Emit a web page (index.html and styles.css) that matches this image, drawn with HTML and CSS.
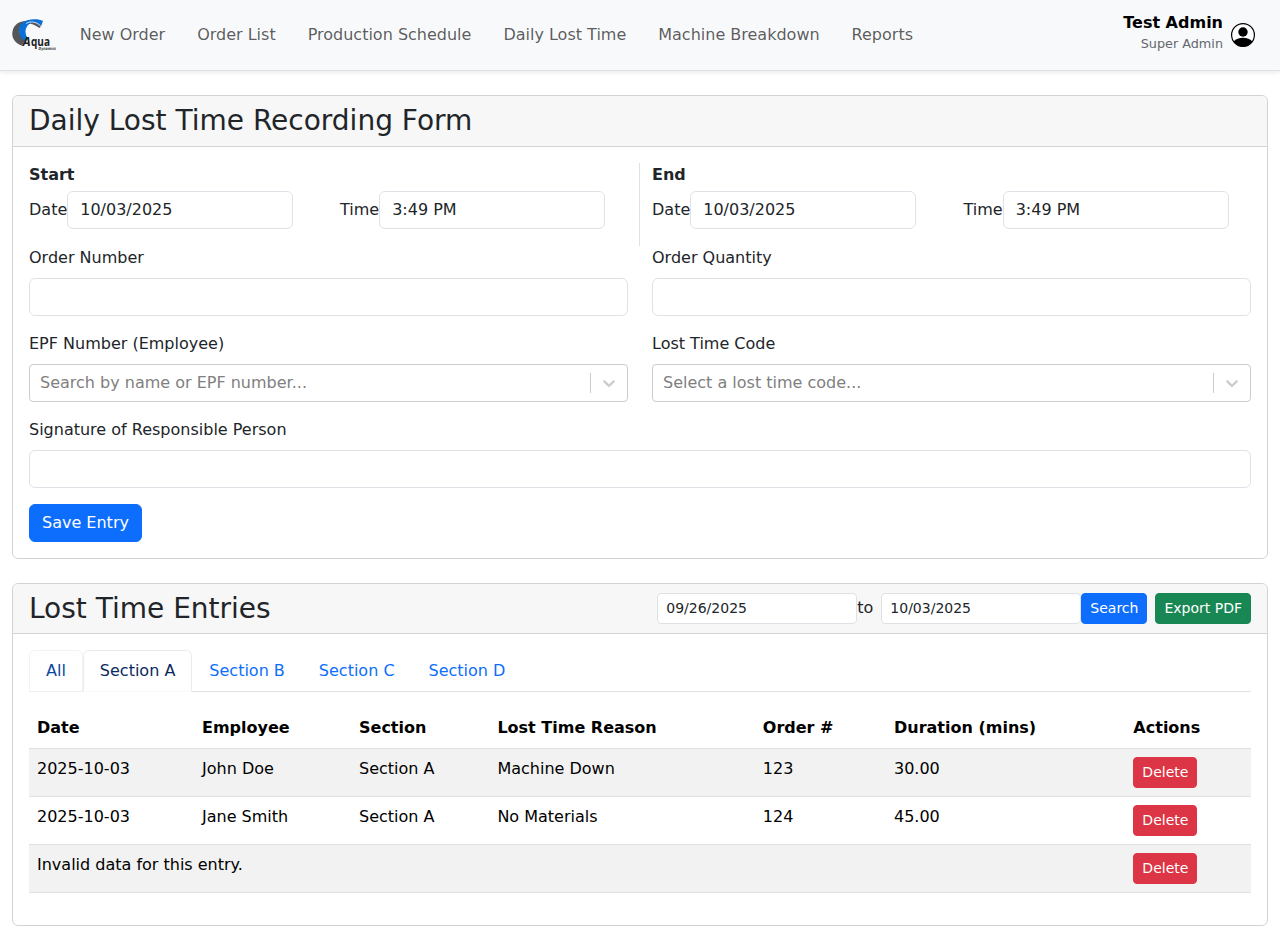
FILE: index.html
```html
<!DOCTYPE html>
<html lang="en">
<head>
<meta charset="utf-8">
<title>Daily Lost Time</title>
<link rel="stylesheet" href="styles.css">
</head>
<body>
<nav class="navbar">
  <svg class="logo" width="46" height="38" viewBox="0 -1 46 38" role="img" aria-label="Aqua Dynamics">
    <path fill="#55565a" d="M23 5C14 2 2 4 0.400 15C-0.500 21 3 26 9.500 28.500L14 22.500C5.500 18 5 9 14 6.500C19 5.500 23 8.500 27.500 11L29 9.500C28 7.500 26 6 23 5Z"/>
    <path fill="#0a6fd6" d="M31 4C26 1.200 15 1.500 9.500 6.500C5 11.500 7 19.500 12.500 24L15.500 21C12 15 13 8.500 20 5.500C24 4.500 26.500 6 29 9.500Z"/>
    <path fill="none" stroke="#f8f9fb" stroke-width=".8" d="M14 6.500C19 3.500 25 5 29 9.500"/>
    <text class="logo-name" y="28.600"><tspan class="slant" x="10.500">A</tspan><tspan x="19" textLength="19" lengthAdjust="spacingAndGlyphs">qua</tspan></text>
    <text class="logo-sub" x="26.500" y="32.800" textLength="17.500" lengthAdjust="spacingAndGlyphs">Dynamics</text>
  </svg>
  <div class="links">
    <a>New Order</a><a>Order List</a><a>Production Schedule</a><a>Daily Lost Time</a><a>Machine Breakdown</a><a>Reports</a>
  </div>
  <div class="user">
    <div class="user-text"><div class="user-name">Test Admin</div><div class="user-role">Super Admin</div></div>
    <svg width="24" height="24" viewBox="0 0 24 24">
      <circle cx="12" cy="12" r="11.400" fill="#fff" stroke="#000" stroke-width="1.200"/>
      <circle cx="12" cy="9" r="4.700"/>
      <path d="M2.600 18.500C5 16 8 14.800 12 14.800S19 16 21.400 18.500C19 22 15.500 23.800 12 23.800S5 22 2.600 18.500Z"/>
    </svg>
  </div>
</nav>

<main>
  <section class="card">
    <div class="card-header"><h3>Daily Lost Time Recording Form</h3></div>
    <form class="card-body">
      <div class="periods">
        <div class="period period-start">
          <strong>Start</strong>
          <div class="pair">
            <label>Date<input class="control short" value="10/03/2025"></label>
            <label>Time<input class="control short" value="3:49 PM"></label>
          </div>
        </div>
        <div class="period">
          <strong>End</strong>
          <div class="pair">
            <label>Date<input class="control short" value="10/03/2025"></label>
            <label>Time<input class="control short" value="3:49 PM"></label>
          </div>
        </div>
      </div>
      <div class="fields">
        <div class="field"><label>Order Number</label><input class="control"></div>
        <div class="field"><label>Order Quantity</label><input class="control"></div>
        <div class="field"><label>EPF Number (Employee)</label>
          <div class="select"><span class="placeholder">Search by name or EPF number...</span><span class="separator"></span>
            <svg class="chevron" width="20" height="20" viewBox="0 0 20 20"><path d="M4.516 7.548c0.436-0.446 1.043-0.481 1.576 0l3.908 3.747 3.908-3.747c0.533-0.481 1.141-0.446 1.574 0 0.436 0.445 0.408 1.197 0 1.615-0.406 0.418-4.695 4.502-4.695 4.502-0.217 0.223-0.502 0.335-0.787 0.335s-0.570-0.112-0.789-0.335c0 0-4.287-4.084-4.695-4.502s-0.436-1.170 0-1.615z"/></svg>
          </div>
        </div>
        <div class="field"><label>Lost Time Code</label>
          <div class="select"><span class="placeholder">Select a lost time code...</span><span class="separator"></span>
            <svg class="chevron" width="20" height="20" viewBox="0 0 20 20"><path d="M4.516 7.548c0.436-0.446 1.043-0.481 1.576 0l3.908 3.747 3.908-3.747c0.533-0.481 1.141-0.446 1.574 0 0.436 0.445 0.408 1.197 0 1.615-0.406 0.418-4.695 4.502-4.695 4.502-0.217 0.223-0.502 0.335-0.787 0.335s-0.570-0.112-0.789-0.335c0 0-4.287-4.084-4.695-4.502s-0.436-1.170 0-1.615z"/></svg>
          </div>
        </div>
        <div class="field wide"><label>Signature of Responsible Person</label><input class="control"></div>
      </div>
      <button class="btn primary" type="button">Save Entry</button>
    </form>
  </section>

  <section class="card">
    <div class="card-header">
      <h3>Lost Time Entries</h3>
      <div class="filters">
        <input class="control small" value="09/26/2025"><span class="to">to</span><input class="control small" value="10/03/2025"><button class="btn primary btn-sm search">Search</button><button class="btn success btn-sm">Export PDF</button>
      </div>
    </div>
    <div class="card-body">
      <div class="tabs">
        <a class="tab leaving">All</a><a class="tab entering">Section A</a><a class="tab">Section B</a><a class="tab">Section C</a><a class="tab">Section D</a>
      </div>
      <table class="table">
        <colgroup><col class="c-date"><col class="c-emp"><col class="c-sec"><col class="c-reason"><col class="c-order"><col class="c-dur"><col></colgroup>
        <thead><tr><th>Date</th><th>Employee</th><th>Section</th><th>Lost Time Reason</th><th>Order #</th><th>Duration (mins)</th><th>Actions</th></tr></thead>
        <tbody>
          <tr><td>2025-10-03</td><td>John Doe</td><td>Section A</td><td>Machine Down</td><td>123</td><td>30.00</td><td><button class="btn danger btn-sm">Delete</button></td></tr>
          <tr><td>2025-10-03</td><td>Jane Smith</td><td>Section A</td><td>No Materials</td><td>124</td><td>45.00</td><td><button class="btn danger btn-sm">Delete</button></td></tr>
          <tr><td colspan="6">Invalid data for this entry.</td><td><button class="btn danger btn-sm">Delete</button></td></tr>
        </tbody>
      </table>
    </div>
  </section>
</main>
</body>
</html>
```
FILE: styles.css
```css
*, *::before, *::after { box-sizing: border-box; }
html { overflow: hidden; }
body {
  margin: 0;
  font: 16px/1.5 "DejaVu Sans", sans-serif;
  color: #212529;
  background: #fff;
}
input, button { font: inherit; color: inherit; margin: 0; }

.navbar {
  display: flex;
  align-items: center;
  height: 71px;
  padding: 0 25px 0 12px;
  background: #f8f9fb;
  border-bottom: 1px solid #dbe1e7;
  box-shadow: 0 2px 4px rgba(0, 0, 0, .075);
}
.logo { display: block; flex: none; overflow: visible; }
.logo-name { font: bold 11.5px "Open Sans", "DejaVu Sans", sans-serif; fill: #222; }
.slant { font-style: italic; font-size: 13px; }
.logo-sub { font: italic bold 4.3px "DejaVu Sans", sans-serif; fill: #444; }
.links { display: flex; gap: 32px; margin-left: 21.7px; color: rgba(0, 0, 0, .65); }
.links a { white-space: nowrap; }
.user { display: flex; align-items: center; gap: 8px; margin-left: auto; color: #000; }
.user-text { text-align: right; line-height: 20px; padding-bottom: 5px; }
.user-name { font-weight: bold; line-height: 22px; }
.user-role { font-size: 12.8px; color: #63686d; }

main { padding: 24px 12px 0; }
.card { border: 1px solid #d3d3d3; border-radius: 6px; background: #fff; margin-bottom: 24px; overflow: hidden; }
.card-header {
  display: flex;
  justify-content: space-between;
  align-items: center;
  padding: 8px 16px;
  background: #f7f7f7;
  border-bottom: 1px solid #d3d3d3;
}
.card-body { padding: 16px; }
h3 { margin: 0; font-size: 28px; font-weight: 500; line-height: 1.2; }

.periods { display: grid; grid-template-columns: 1fr 1fr; margin: 0 -12px; }
.period { padding: 0 12px; height: 83px; }
.period-start { border-right: 1px solid #dee2e6; }
.period strong { display: block; height: 28px; }
.pair { display: grid; grid-template-columns: 1fr 1fr; margin-right: -24px; }
.pair label { display: flex; align-items: center; }
.control {
  display: block;
  width: 100%;
  height: 38px;
  padding: 6px 12px;
  border: 1px solid #dee2e6;
  border-radius: 6px;
  background: #fff;
  outline: 0;
}
.short { width: 226px; }
.small { width: 200px; height: 31px; padding: 4px 8px; font-size: 14px; border-radius: 4px; }

.fields { display: grid; grid-template-columns: 1fr 1fr; gap: 16px 24px; margin-bottom: 16px; }
.field > label { display: block; margin-bottom: 8px; }
.wide { grid-column: 1 / -1; }
.select {
  display: flex;
  align-items: center;
  height: 38px;
  border: 1px solid #ccc;
  border-radius: 4px;
}
.placeholder { flex: 1; padding-left: 10px; color: #808080; }
.separator { width: 1px; height: 20px; background: #ccc; }
.chevron { margin: 0 8px; fill: #ccc; }

.btn {
  display: inline-block;
  padding: 6px 12px;
  border: 1px solid transparent;
  border-radius: 6px;
  color: #fff;
  line-height: 24px;
  white-space: nowrap;
}
form .btn { display: block; }
.btn-sm { padding: 4px 8px; font-size: 14px; line-height: 21px; border-radius: 4px; }
.primary { background: #0d6efd; border-color: #0d6efd; }
.success { background: #198754; border-color: #198754; }
.danger { background: #dc3545; border-color: #dc3545; }
.filters { display: flex; align-items: center; margin: -2px 0; }
.to { margin-right: 8px; }
.search { margin-right: 8px; }

.tabs { display: flex; border-bottom: 1px solid #dee2e6; margin-bottom: 16px; }
.tab {
  padding: 8px 16px;
  margin-bottom: -1px;
  border: 1px solid transparent;
  border-radius: 6px 6px 0 0;
  color: #0d6efd;
}
.leaving { color: #0a479f; background: #fff; border-color: #f1f3f5 #f1f3f5 #edeff1; }
.entering { color: #0b2a5c; background: #fff; border-color: #e9ecef #e9ecef #fafafa; }

.table { width: 100%; table-layout: fixed; border-collapse: collapse; margin-bottom: 16px; color: #000; }
.table th, .table td { padding: 8px; text-align: left; vertical-align: top; border-bottom: 1px solid #dee2e6; }
.table td { height: 48px; }
.table td .btn { display: block; }
.table tbody tr:nth-child(odd) { background: #f2f2f2; }
.c-date { width: 165px; }
.c-emp { width: 157px; }
.c-sec { width: 138.4px; }
.c-reason { width: 265.4px; }
.c-order { width: 131.2px; }
.c-dur { width: 239.4px; }
```
